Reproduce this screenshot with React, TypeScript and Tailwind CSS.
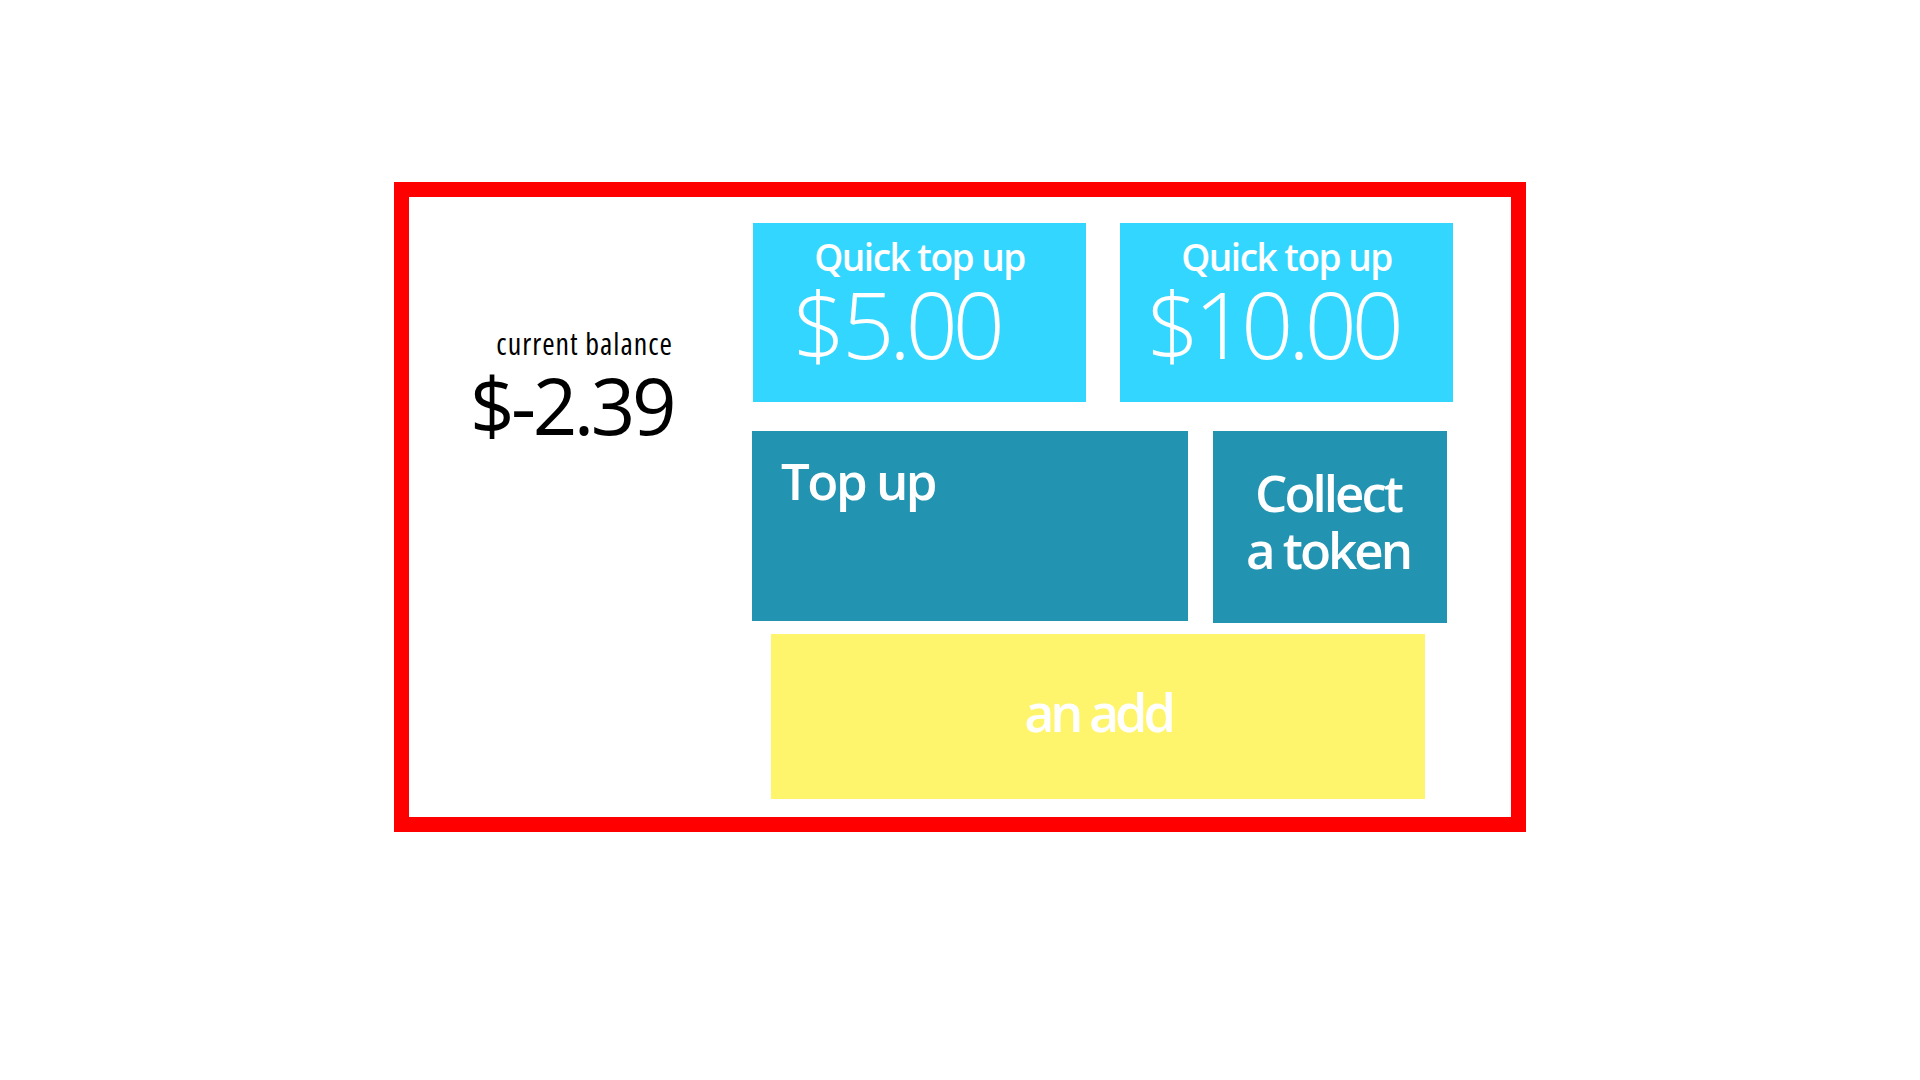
import React from 'react';

const sans = "font-['Open_Sans','Noto_Sans',sans-serif]";

const QuickTopUp: React.FC<{ value: string; offset: string; gap: string }> = ({ value, offset, gap }) => (
  <button className={`${sans} w-[333px] h-[179px] bg-[#33d6ff] text-white flex flex-col`}>
    <span className="font-semibold text-[37px] leading-[40px] tracking-[-1.5px] pt-[14px] text-center">Quick top up</span>
    <span className={`flex font-light text-[92px] leading-[92px] tracking-[-5.5px] mt-[1px] ${offset}`}>
      <span>$</span>
      <span className={gap}>{value}</span>
    </span>
  </button>
);

const App: React.FC = () => {
  return (
    <div className="min-h-screen bg-white pt-[182px]">
      <div className="mx-auto w-[1132px] h-[650px] border-[15px] border-[#ff0000] flex">
        <div className={`${sans} w-[344px] pt-[132px] pr-[80px] text-right text-black`}>
          <div className="[font-stretch:condensed] text-[30px] leading-[30px] tracking-[1px]">current balance</div>
          <div className="font-medium text-[78px] leading-[80px] tracking-[-3.5px] mt-[6px]">$-2.39</div>
        </div>

        <div className="flex flex-col pt-[26px]">
          <div className="flex gap-[34px]">
            <QuickTopUp value="5.00" offset="pl-[40px]" gap="ml-[2px]" />
            <QuickTopUp value="10.00" offset="pl-[27px]" gap="ml-0" />
          </div>

          <div className="flex items-start mt-[29px] -ml-px">
            <button className={`${sans} w-[436px] h-[190px] bg-[#2293b0] text-white font-semibold text-[51px] leading-[52px] tracking-[-2.5px] text-left pl-[29px] pt-[23px] flex items-start`}>
              Top up
            </button>
            <button className={`${sans} ml-[25px] w-[234px] h-[192px] bg-[#2293b0] text-white font-semibold text-[51px] leading-[57px] tracking-[-3px] text-center pt-[33px] pr-[4px] flex flex-col items-center`}>
              <span>Collect</span>
              <span>a token</span>
            </button>
          </div>

          <div className={`${sans} mt-[11px] ml-[18px] w-[654px] h-[165px] bg-[#fef56c] text-white font-semibold text-[52px] leading-[54px] tracking-[-4px] text-center pt-[51px]`}>
            an add
          </div>
        </div>
      </div>
    </div>
  );
};

export default App;
